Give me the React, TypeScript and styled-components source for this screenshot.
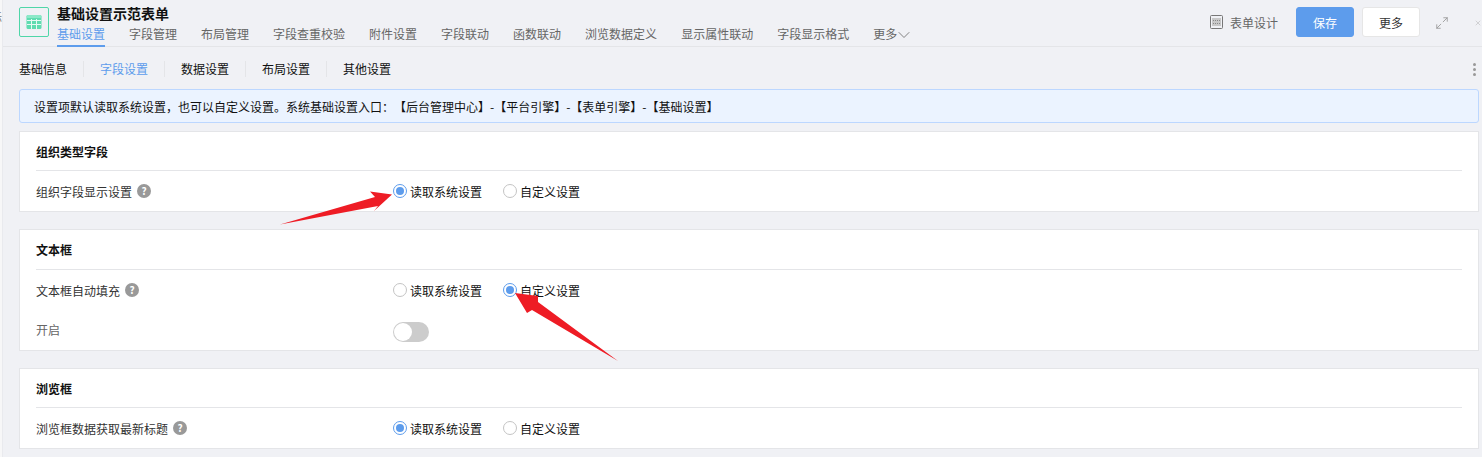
import React from "react";
import styled, { createGlobalStyle } from "styled-components";
import { ChevronDown, Maximize2, X } from "lucide-react";

const GlobalStyle = createGlobalStyle`
  html, body {
    margin: 0;
    padding: 0;
    background: #f0f1f5;
    overflow: hidden;
  }
  body {
    font-family: "Noto Sans CJK SC", "Liberation Sans", sans-serif;
    font-size: 12px;
    color: #111;
    text-spacing-trim: space-all;
  }
`;

/* ------------------ Page ------------------ */
const Page = styled.div`
  position: relative;
  width: 1482px;
  height: 457px;
  overflow: hidden;
  display: flex;
`;

const Gutter = styled.div`
  width: 3px;
  flex: none;
  background: #f7f7f8;
  border-right: 1px solid #e9eaee;
  box-sizing: border-box;
  overflow: hidden;
  color: #777;
  font-size: 12px;
  line-height: 34px;
  white-space: nowrap;
  direction: rtl;
`;

const Main = styled.div`
  flex: 1;
  min-width: 0;
  display: flex;
  flex-direction: column;
`;

/* ------------------ Header ------------------ */
const Header = styled.header`
  height: 46px;
  flex: none;
  border-bottom: 1px solid #e4e5e8;
  display: flex;
  padding-left: 16px;
`;

const FormIcon = styled.div`
  width: 28px;
  height: 28px;
  margin-top: 7px;
  border: 1px solid #4fd6a8;
  border-radius: 2px;
  display: flex;
  align-items: center;
  justify-content: center;
`;

const TitleBlock = styled.div`
  margin-left: 8px;
  flex: 1;
  min-width: 0;
`;

const Title = styled.div`
  font-size: 14px;
  font-weight: 700;
  line-height: 20px;
  margin-top: 3px;
  color: #111;
`;

const TabRow = styled.nav`
  display: flex;
  gap: 24px;
  margin-top: 1px;
`;

const Tab = styled.div<{ $active?: boolean }>`
  height: 21px;
  line-height: 20px;
  color: ${props => (props.$active ? "#5d9cec" : "#666")};
  border-bottom: ${props => (props.$active ? "2px solid #5d9cec" : "none")};
  display: flex;
  align-items: flex-start;
`;

const MoreChevron = styled(ChevronDown)`
  margin: 1px 0 0 -3px;
  color: #777;
`;

const HeaderActions = styled.div`
  display: flex;
  align-items: flex-start;
  padding-top: 7px;
  flex: none;
`;

const DesignLink = styled.div`
  display: flex;
  align-items: center;
  gap: 7px;
  height: 30px;
  color: #666;
  margin-right: 18px;
`;

const Button = styled.div<{ $primary?: boolean }>`
  height: 30px;
  width: 58px;
  box-sizing: border-box;
  border-radius: 3px;
  display: flex;
  align-items: center;
  justify-content: center;
  background: ${props => (props.$primary ? "#5d9cec" : "#fff")};
  color: ${props => (props.$primary ? "#fff" : "#333")};
  border: 1px solid ${props => (props.$primary ? "#5d9cec" : "#e6e6e6")};
  margin-right: 8px;
`;

const WindowIcon = styled.div<{ $color: string; $width: number; $gap?: number }>`
  width: ${props => props.$width}px;
  margin-left: ${props => props.$gap || 0}px;
  height: 32px;
  display: flex;
  align-items: center;
  justify-content: center;
  color: ${props => props.$color};
`;

/* ------------------ Sub tabs ------------------ */
const SubBar = styled.div`
  height: 42px;
  box-sizing: border-box;
  padding: 2px 0 0 16px;
  flex: none;
  display: flex;
  align-items: center;
`;

const SubTab = styled.div<{ $active?: boolean }>`
  height: 16px;
  line-height: 16px;
  padding-right: 16px;
  margin-right: 16px;
  border-right: 1px solid #e4e5e8;
  color: ${props => (props.$active ? "#5d9cec" : "#111")};

  &:nth-last-child(2) {
    border-right: none;
  }
`;

const SubMore = styled.div`
  margin-left: auto;
  margin-right: 1px;
  width: 14px;
  display: flex;
  justify-content: center;
`;

/* ------------------ Content ------------------ */
const Content = styled.div`
  padding: 0 3px 0 16px;
  display: flex;
  flex-direction: column;
`;

const Notice = styled.div`
  height: 34px;
  box-sizing: border-box;
  background: #ebf3ff;
  border: 1px solid #bcd7ff;
  border-radius: 3px;
  padding-left: 14px;
  display: flex;
  align-items: center;
  color: #111;
  margin-bottom: 8px;
`;

const Card = styled.section`
  background: #fff;
  border: 1px solid #e4e5e8;
  padding: 0 16px;
  margin-bottom: 17px;
`;

const CardTitle = styled.div<{ $tall?: boolean }>`
  height: ${props => (props.$tall ? 39 : 38)}px;
  line-height: 40px;
  border-bottom: 1px solid #e4e5e8;
  font-weight: 700;
  color: #111;
`;

const Row = styled.div`
  height: 40px;
  display: flex;
  align-items: center;
`;

const RowLabel = styled.div<{ $muted?: boolean }>`
  width: 357px;
  flex: none;
  display: flex;
  align-items: center;
  gap: 5px;
  color: ${props => (props.$muted ? "#666" : "#333")};
  margin-bottom: ${props => (props.$muted ? 2 : 0)}px;
`;

const Help = styled.span`
  width: 14px;
  height: 14px;
  border-radius: 50%;
  background: #999;
  color: #fff;
  font-size: 10px;
  font-weight: 700;
  line-height: 14px;
  text-align: center;
`;

const RadioGroup = styled.div`
  display: flex;
  gap: 21px;
`;

const RadioItem = styled.div`
  display: flex;
  align-items: center;
  gap: 3px;
  color: #111;
`;

const RadioMark = styled.span<{ $checked?: boolean }>`
  width: 14px;
  height: 14px;
  box-sizing: border-box;
  border-radius: 50%;
  background: #fff;
  border: 1px solid ${props => (props.$checked ? "#5d9cec" : "#c4c4c4")};
  display: flex;
  align-items: center;
  justify-content: center;

  &::after {
    content: "";
    display: ${props => (props.$checked ? "block" : "none")};
    width: 8px;
    height: 8px;
    border-radius: 50%;
    background: #5d9cec;
  }
`;

const Switch = styled.div`
  width: 36px;
  height: 20px;
  margin-top: 4px;
  border-radius: 10px;
  background: #ccc;
  padding: 1px;
  box-sizing: border-box;
`;

const SwitchKnob = styled.div`
  width: 18px;
  height: 18px;
  border-radius: 50%;
  background: #fff;
`;

/* red annotation arrows lying over the page */
const Annotation = styled.svg`
  position: absolute;
  left: 0;
  top: 0;
  pointer-events: none;
`;

const Radios = ({ checked }: { checked: 0 | 1 }) => (
  <RadioGroup>
    <RadioItem>
      <RadioMark $checked={checked === 0} />
      读取系统设置
    </RadioItem>
    <RadioItem>
      <RadioMark $checked={checked === 1} />
      自定义设置
    </RadioItem>
  </RadioGroup>
);

const tabs = ["基础设置", "字段管理", "布局管理", "字段查重校验", "附件设置", "字段联动", "函数联动", "浏览数据定义", "显示属性联动", "字段显示格式"];
const subTabs = ["基础信息", "字段设置", "数据设置", "布局设置", "其他设置"];

const App = () => {
  return (
    <Page>
      <GlobalStyle />
      <Gutter>标</Gutter>
      <Main>
        <Header>
          <FormIcon>
            <svg width="16" height="14" viewBox="0 0 16 14">
              <rect x="0.5" y="0" width="15" height="14" rx="1.5" fill="#5fdcb0" />
              <rect x="0.5" y="0" width="15" height="3" rx="1.5" fill="#8ce8c8" />
              <path d="M1 5.5h14M1 9.5h14M5.5 4v10M10.5 4v10" stroke="#e6faf3" strokeWidth="1" />
            </svg>
          </FormIcon>
          <TitleBlock>
            <Title>基础设置示范表单</Title>
            <TabRow>
              {tabs.map((tab, i) => (
                <Tab key={tab} $active={i === 0}>{tab}</Tab>
              ))}
              <Tab>
                更多
                <MoreChevron size={20} strokeWidth={1.1} />
              </Tab>
            </TabRow>
          </TitleBlock>
          <HeaderActions>
            <DesignLink>
              <svg width="13" height="14" viewBox="0 0 13 14" fill="none">
                <rect x="0.5" y="0.5" width="12" height="13" rx="1" stroke="#777" />
                <rect x="2" y="3" width="9" height="8" fill="#c8c8c8" />
                <path d="M3 5.5h7M3 8.5h7" stroke="#888" strokeDasharray="1 1" />
              </svg>
              表单设计
            </DesignLink>
            <Button $primary>保存</Button>
            <Button>更多</Button>
            <WindowIcon $color="#999" $width={28}>
              <Maximize2 size={14} strokeWidth={1.5} />
            </WindowIcon>
            <WindowIcon $color="#999" $width={8} $gap={18}>
              <X size={22} strokeWidth={1.1} />
            </WindowIcon>
          </HeaderActions>
        </Header>
        <SubBar>
          {subTabs.map((tab, i) => (
            <SubTab key={tab} $active={i === 1}>{tab}</SubTab>
          ))}
          <SubMore>
            <svg width="3" height="13" viewBox="0 0 3 13" fill="#999">
              <circle cx="1.5" cy="1.5" r="1.5" />
              <circle cx="1.5" cy="6.5" r="1.5" />
              <circle cx="1.5" cy="11.5" r="1.5" />
            </svg>
          </SubMore>
        </SubBar>
        <Content>
          <Notice>设置项默认读取系统设置，也可以自定义设置。系统基础设置入口：【后台管理中心】-【平台引擎】-【表单引擎】-【基础设置】</Notice>
          <Card>
            <CardTitle>组织类型字段</CardTitle>
            <Row>
              <RowLabel>组织字段显示设置<Help>?</Help></RowLabel>
              <Radios checked={0} />
            </Row>
          </Card>
          <Card>
            <CardTitle $tall>文本框</CardTitle>
            <Row>
              <RowLabel>文本框自动填充<Help>?</Help></RowLabel>
              <Radios checked={1} />
            </Row>
            <Row>
              <RowLabel $muted>开启</RowLabel>
              <Switch><SwitchKnob /></Switch>
            </Row>
          </Card>
          <Card>
            <CardTitle>浏览框</CardTitle>
            <Row>
              <RowLabel>浏览框数据获取最新标题<Help>?</Help></RowLabel>
              <Radios checked={0} />
            </Row>
          </Card>
        </Content>
      </Main>
      <Annotation width="1482" height="457" viewBox="0 0 1482 457">
        <polygon points="280,224.5 375,197 370,191.5 392,194.5 374,211 378,206" fill="#ee1c25" />
        <polygon points="618,361 538,302 538,296 515,293 527,313 532,310" fill="#ee1c25" />
      </Annotation>
    </Page>
  );
};

export default App;
